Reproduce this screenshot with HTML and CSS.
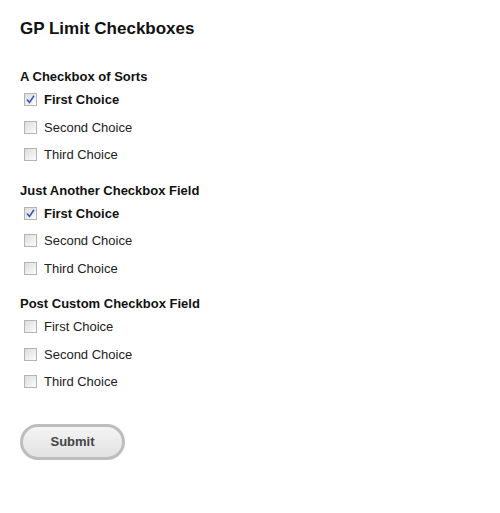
FILE: index.html
```html
<!DOCTYPE html>
<html>
<head>
<meta charset="utf-8">
<link rel="stylesheet" href="styles.css">
</head>
<body>
<form class="form">
  <h3 class="title">GP Limit Checkboxes</h3>
  <div class="fields">
    <div class="field">
      <div class="label">A Checkbox of Sorts</div>
      <ul class="choices">
        <li class="choice checked"><span class="box"><svg viewBox="0 0 9 9" width="9" height="9"><path d="M1 4.5 L3.5 7.5 L8 0.8" fill="none" stroke="#3a57b8" stroke-width="1.6"/></svg></span><span class="text">First Choice</span></li>
        <li class="choice"><span class="box"></span><span class="text">Second Choice</span></li>
        <li class="choice"><span class="box"></span><span class="text">Third Choice</span></li>
      </ul>
    </div>
    <div class="field">
      <div class="label">Just Another Checkbox Field</div>
      <ul class="choices">
        <li class="choice checked"><span class="box"><svg viewBox="0 0 9 9" width="9" height="9"><path d="M1 4.5 L3.5 7.5 L8 0.8" fill="none" stroke="#3a57b8" stroke-width="1.6"/></svg></span><span class="text">First Choice</span></li>
        <li class="choice"><span class="box"></span><span class="text">Second Choice</span></li>
        <li class="choice"><span class="box"></span><span class="text">Third Choice</span></li>
      </ul>
    </div>
    <div class="field">
      <div class="label">Post Custom Checkbox Field</div>
      <ul class="choices">
        <li class="choice"><span class="box"></span><span class="text">First Choice</span></li>
        <li class="choice"><span class="box"></span><span class="text">Second Choice</span></li>
        <li class="choice"><span class="box"></span><span class="text">Third Choice</span></li>
      </ul>
    </div>
  </div>
  <div class="footer">
    <button type="button" class="submit">Submit</button>
  </div>
</form>
</body>
</html>
```

FILE: styles.css
```css
html, body {
  margin: 0;
  padding: 0;
  background: #fff;
}
body {
  font-family: "Liberation Sans", Arial, sans-serif;
  color: #000;
}
.form {
  padding: 19px 20px 0 20px;
}
.title {
  margin: 0;
  font-size: 17px;
  line-height: 20px;
  font-weight: bold;
  color: #111;
}
.fields {
  display: flex;
  flex-direction: column;
  gap: 13px;
  margin-top: 29px;
}
.label {
  font-size: 13px;
  font-weight: bold;
  line-height: 18px;
  color: #111;
}
.choices {
  list-style: none;
  margin: 0;
  padding: 0;
}
.choice {
  display: flex;
  align-items: center;
  height: 27.5px;
  padding-left: 4px;
  font-size: 13px;
  color: #222;
}
.choice.checked .text {
  font-weight: bold;
  color: #111;
}
.box {
  box-sizing: border-box;
  width: 13px;
  height: 13px;
  border: 1px solid #b4b4b4;
  background: linear-gradient(135deg, #dcdcdc 0%, #f4f4f4 75%, #fff 100%);
  display: flex;
  align-items: center;
  justify-content: center;
  margin-right: 7px;
  flex: none;
}
.box svg {
  display: block;
}
.footer {
  margin-top: 28px;
}
.submit {
  width: 105px;
  height: 36px;
  border: 3px solid #bdbdbd;
  border-radius: 18px;
  background: linear-gradient(#f4f4f4, #e2e2e2);
  font-family: "Liberation Sans", Arial, sans-serif;
  font-size: 13px;
  font-weight: bold;
  color: #444;
  padding: 0;
}
```
